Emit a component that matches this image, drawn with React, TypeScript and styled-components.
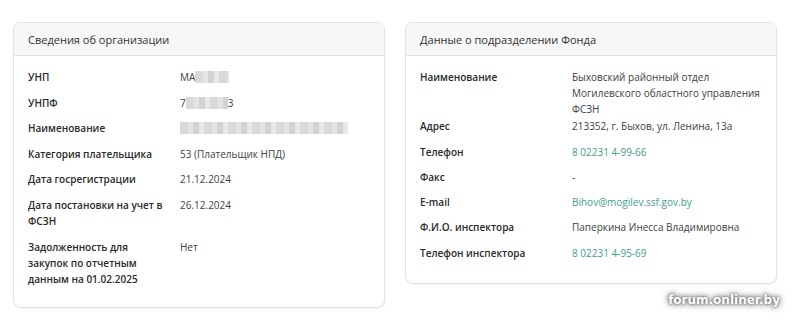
import React from 'react';
import styled, { createGlobalStyle } from 'styled-components';

const GlobalStyle = createGlobalStyle`
  html, body {
    margin: 0;
    padding: 0;
    background: #ffffff;
  }
  body {
    font-family: 'Open Sans', 'Noto Sans', sans-serif;
    color: #333333;
  }
`;

const Page = styled.div`
  position: relative;
  width: 800px;
  height: 320px;
  box-sizing: border-box;
  padding: 22px 0 0 13px;
  display: flex;
  align-items: flex-start;
  gap: 20px;
`;

const Card = styled.section<{ $padBottom: number }>`
  width: 372px;
  box-sizing: border-box;
  border: 1px solid #e3e3e3;
  border-radius: 8px;
  background: #ffffff;
  box-shadow: 0 1px 2px rgba(0, 0, 0, 0.05);
  overflow: hidden;
  padding-bottom: ${(p) => p.$padBottom}px;
`;

const CardHeader = styled.header`
  background: #f7f7f7;
  border-bottom: 1px solid #e3e3e3;
  height: 32px;
  display: flex;
  align-items: center;
  padding: 0 14px;
  font-size: 11px;
  color: #333333;
`;

const Body = styled.div<{ $gap: number }>`
  display: flex;
  flex-direction: column;
  gap: ${(p) => p.$gap}px;
  padding: 13px 14px 0;
`;

const Row = styled.div<{ $tight?: boolean }>`
  display: grid;
  grid-template-columns: 140px 1fr;
  column-gap: 12px;
  font-size: 10px;
  line-height: 16px;
  margin-bottom: ${(p) => (p.$tight ? '-8px' : '0')};
`;

const Label = styled.div`
  font-weight: 600;
  color: #2a2a2a;
`;

const Value = styled.div`
  color: #404040;
`;

const Link = styled.a`
  color: #3f9e8b;
  text-decoration: none;
`;

const Hidden = styled.span<{ $w: number }>`
  display: inline-block;
  vertical-align: -2px;
  width: ${(p) => p.$w}px;
  height: 12px;
  background: repeating-linear-gradient(
    90deg,
    #d9d9d9 0 8px,
    #e4e4e4 8px 13px,
    #cfd2d6 13px 19px,
    #e8e8e8 19px 24px
  );
  filter: blur(0.6px);
`;

const Watermark = styled.div`
  position: absolute;
  right: 20px;
  bottom: 13px;
  font-family: 'DejaVu Sans', Verdana, sans-serif;
  font-weight: 700;
  font-size: 12px;
  color: #ffffff;
  text-shadow:
    0 0 2px #5e5e5e,
    0 0 4px #7a7a7a,
    0 0 7px #9a9a9a,
    0 0 10px #b8b8b8;
`;

const App = () => {
  return (
    <>
      <GlobalStyle />
      <Page>
        <Card $padBottom={20}>
          <CardHeader>Сведения об организации</CardHeader>
          <Body $gap={9.6}>
            <Row>
              <Label>УНП</Label>
              <Value>
                МА<Hidden $w={34} />
              </Value>
            </Row>
            <Row>
              <Label>УНПФ</Label>
              <Value>
                7<Hidden $w={42} />3
              </Value>
            </Row>
            <Row>
              <Label>Наименование</Label>
              <Value>
                <Hidden $w={168} />
              </Value>
            </Row>
            <Row>
              <Label>Категория плательщика</Label>
              <Value>53 (Плательщик НПД)</Value>
            </Row>
            <Row>
              <Label>Дата госрегистрации</Label>
              <Value>21.12.2024</Value>
            </Row>
            <Row>
              <Label>Дата постановки на учет в ФСЗН</Label>
              <Value>26.12.2024</Value>
            </Row>
            <Row>
              <Label>Задолженность для закупок по отчетным данным на 01.02.2025</Label>
              <Value>Нет</Value>
            </Row>
          </Body>
        </Card>

        <Card $padBottom={22}>
          <CardHeader>Данные о подразделении Фонда</CardHeader>
          <Body $gap={9.3}>
            <Row $tight>
              <Label>Наименование</Label>
              <Value>Быховский районный отдел Могилевского областного управления ФСЗН</Value>
            </Row>
            <Row>
              <Label>Адрес</Label>
              <Value>213352, г. Быхов, ул. Ленина, 13а</Value>
            </Row>
            <Row>
              <Label>Телефон</Label>
              <Value>
                <Link href="#">8 02231 4-99-66</Link>
              </Value>
            </Row>
            <Row>
              <Label>Факс</Label>
              <Value>-</Value>
            </Row>
            <Row>
              <Label>E-mail</Label>
              <Value>
                <Link href="#">Bihov@mogilev.ssf.gov.by</Link>
              </Value>
            </Row>
            <Row>
              <Label>Ф.И.О. инспектора</Label>
              <Value>Паперкина Инесса Владимировна</Value>
            </Row>
            <Row>
              <Label>Телефон инспектора</Label>
              <Value>
                <Link href="#">8 02231 4-95-69</Link>
              </Value>
            </Row>
          </Body>
        </Card>
        <Watermark>forum.onliner.by</Watermark>
      </Page>
    </>
  );
};

export default App;
